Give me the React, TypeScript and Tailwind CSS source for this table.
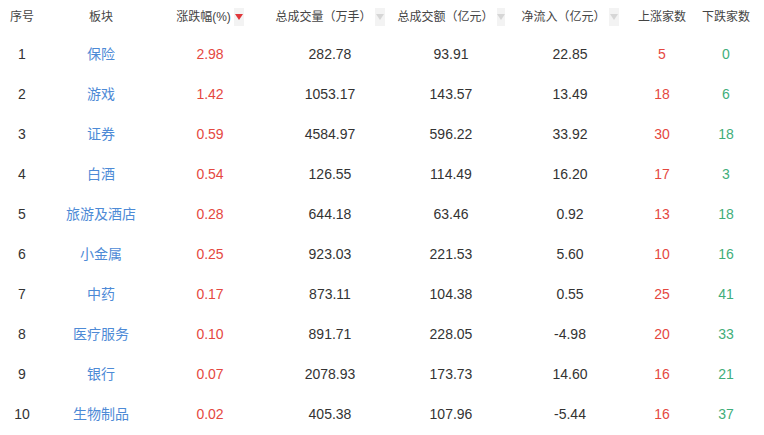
const rows = [
  ["1", "保险", "2.98", "282.78", "93.91", "22.85", "5", "0"],
  ["2", "游戏", "1.42", "1053.17", "143.57", "13.49", "18", "6"],
  ["3", "证券", "0.59", "4584.97", "596.22", "33.92", "30", "18"],
  ["4", "白酒", "0.54", "126.55", "114.49", "16.20", "17", "3"],
  ["5", "旅游及酒店", "0.28", "644.18", "63.46", "0.92", "13", "18"],
  ["6", "小金属", "0.25", "923.03", "221.53", "5.60", "10", "16"],
  ["7", "中药", "0.17", "873.11", "104.38", "0.55", "25", "41"],
  ["8", "医疗服务", "0.10", "891.71", "228.05", "-4.98", "20", "33"],
  ["9", "银行", "0.07", "2078.93", "173.73", "14.60", "16", "21"],
  ["10", "生物制品", "0.02", "405.38", "107.96", "-5.44", "16", "37"],
];

const SortIcon = ({ active }: { active?: boolean }) => (
  <span className="ml-[3px] inline-flex h-[18px] w-[10px] items-center justify-center bg-[#f3f3f3]">
    <svg width="8" height="6" viewBox="0 0 8 6">
      <path d="M0 0 L8 0 L4 6 Z" fill={active ? "#e0373b" : "#d6d6d6"} />
    </svg>
  </span>
);

const widths = ["w-[44px]", "w-[114px]", "w-[104px]", "w-[136px]", "w-[106px]", "w-[132px]", "w-[52px]", "w-[76px]"];

export default function App() {
  return (
    <div className="h-[435px] w-[764px] bg-white font-['Liberation_Sans','Noto_Sans_CJK_SC',sans-serif]">
      <div className="flex h-[34px] items-center text-[12px] text-[#444]">
        <div className={`${widths[0]} text-center`}>序号</div>
        <div className={`${widths[1]} text-center`}>板块</div>
        <div className={`${widths[2]} flex items-center justify-center`}>
          涨跌幅(%)<SortIcon active />
        </div>
        <div className={`${widths[3]} flex items-center justify-center whitespace-nowrap`}>
          总成交量（万手）<SortIcon />
        </div>
        <div className={`${widths[4]} flex items-center justify-center whitespace-nowrap`}>
          总成交额（亿元）<SortIcon />
        </div>
        <div className={`${widths[5]} flex items-center justify-center whitespace-nowrap`}>
          净流入（亿元）<SortIcon />
        </div>
        <div className={`${widths[6]} text-center whitespace-nowrap`}>上涨家数</div>
        <div className={`${widths[7]} text-center whitespace-nowrap`}>下跌家数</div>
      </div>
      {rows.map((r) => (
        <div key={r[0]} className="flex h-[40px] items-center text-[14px] text-[#333]">
          <div className={`${widths[0]} text-center`}>{r[0]}</div>
          <div className={`${widths[1]} text-center text-[#4d8ad6]`}>{r[1]}</div>
          <div className={`${widths[2]} text-center text-[#e5483f]`}>{r[2]}</div>
          <div className={`${widths[3]} text-center`}>{r[3]}</div>
          <div className={`${widths[4]} text-center`}>{r[4]}</div>
          <div className={`${widths[5]} text-center`}>{r[5]}</div>
          <div className={`${widths[6]} text-center text-[#e5483f]`}>{r[6]}</div>
          <div className={`${widths[7]} text-center text-[#3fae7a]`}>{r[7]}</div>
        </div>
      ))}
    </div>
  );
}
